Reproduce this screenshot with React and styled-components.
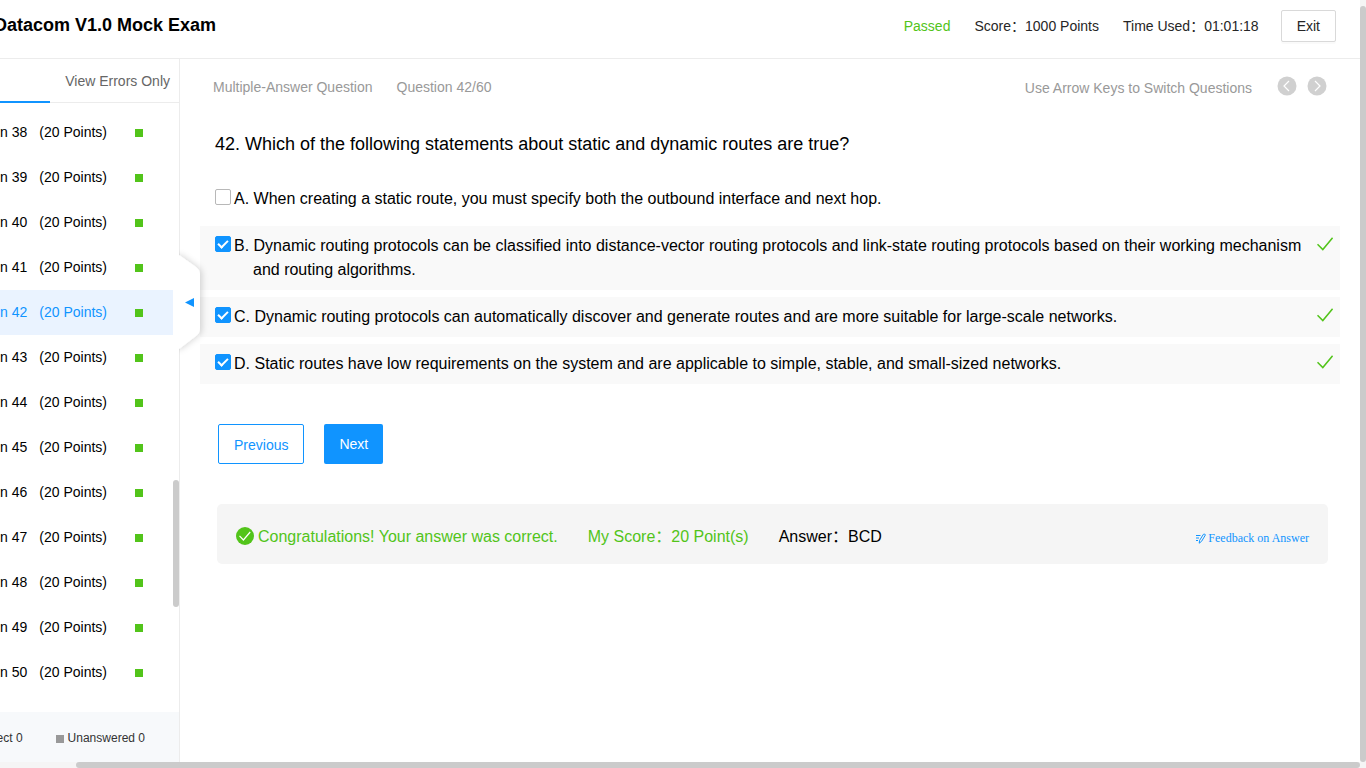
import React from "react";
import styled, { createGlobalStyle } from "styled-components";

const BLUE = "#1094ff";
const GREEN = "#52c41a";
const LINE = "#ececec";

const GlobalStyle = createGlobalStyle`
  *, *::before { box-sizing: border-box; }
  body {
    margin: 0;
    background: #fff;
    color: #000;
    font-family: "Liberation Sans", "Noto Sans CJK SC", sans-serif;
    font-size: 14px;
    line-height: 20px;
  }
  button { font: inherit; cursor: pointer; }
  h1, h2, ul { margin: 0; padding: 0; }
  ul { list-style: none; }
`;

const Frame = styled.div`
  display: grid;
  grid-template-columns: minmax(0, 1fr) 6px;
  grid-template-rows: minmax(0, 1fr) 6px;
  height: 100vh;
  overflow: hidden;
`;

const Track = styled.div`
  display: flex;
  background: #f5f5f5;
  padding-top: ${(p) => p.$top || 0}px;
  padding-left: ${(p) => p.$left || 0}px;
`;

const Thumb = styled.div`
  flex: 1;
  border-radius: 3px;
  background: #cbcbcb;
`;

const Page = styled.div`
  display: flex;
  flex-direction: column;
  min-width: 0;
`;

const Header = styled.header`
  display: flex;
  align-items: center;
  gap: 24px;
  padding: 10px 24px 16px 0;
  border-bottom: 1px solid ${LINE};
  color: #262626;
`;

const Title = styled.h1`
  display: flex;
  justify-content: flex-end;
  width: 216px;
  margin-right: auto;
  padding-bottom: 2px;
  overflow: hidden;
  color: #000;
  font-size: 18px;
  line-height: 24px;
  white-space: nowrap;
`;

const Passed = styled.span`
  color: ${GREEN};
`;

const ExitButton = styled.button`
  height: 32px;
  padding: 0 15px;
  border: 1px solid #d9d9d9;
  border-radius: 2px;
  background: #fff;
  box-shadow: 0 2px 0 rgba(0, 0, 0, 0.02);
  color: #262626;
`;

const HeaderTail = styled.div`
  display: flex;
  align-items: center;
  gap: 22px;
`;

const Body = styled.div`
  position: relative;
  display: flex;
  flex: 1;
  min-height: 0;
`;

const Sidebar = styled.aside`
  display: flex;
  flex-direction: column;
  flex: none;
  width: 180px;
  border-right: 1px solid ${LINE};
`;

const Tabs = styled.div`
  display: flex;
  height: 44px;
  border-bottom: 1px solid ${LINE};
`;

const Tab = styled.button`
  flex: ${(p) => (p.$active ? "0 0 50px" : "1")};
  height: 44px;
  padding: 2px 9px 0 0;
  border: 0;
  border-bottom: 2px solid ${(p) => (p.$active ? BLUE : "transparent")};
  background: none;
  color: #666;
  text-align: right;
  white-space: nowrap;
`;

const ListArea = styled.div`
  display: flex;
  flex: 1;
  min-height: 0;
  overflow: hidden;
`;

const QuestionList = styled.ul`
  flex: 1;
  min-width: 0;
  padding-top: 7px;
`;

const QuestionItem = styled.button`
  display: flex;
  align-items: center;
  justify-content: flex-end;
  gap: 12px;
  width: 100%;
  height: 45px;
  padding: 0 30px 1px 0;
  overflow: hidden;
  border: 0;
  background: ${(p) => (p.$active ? "#eaf3ff" : "transparent")};
  color: ${(p) => (p.$active ? BLUE : "#000")};
  white-space: nowrap;
`;

const Points = styled.span`
  margin-right: 16px;
`;

const Square = styled.span`
  flex: none;
  width: 8px;
  height: 8px;
  margin-top: 2px;
  background: ${(p) => p.$color};
`;

const ListBar = styled.div`
  width: 6px;
  padding-top: 377px;
`;

const ListThumb = styled(Thumb)`
  height: 127px;
`;

const Legend = styled.footer`
  display: flex;
  align-items: center;
  justify-content: flex-end;
  gap: 33px;
  height: 50px;
  padding: 2px 34px 0 0;
  overflow: hidden;
  background: #f7f9fb;
  color: #333;
  font-size: 12px;
  white-space: nowrap;
`;

const LegendItem = styled.span`
  display: flex;
  align-items: center;
  gap: 4px;
`;

const Collapse = styled.button`
  position: absolute;
  top: 186px;
  left: 179px;
  padding: 0;
  border: 0;
  background: none;
  line-height: 0;
`;

const Main = styled.main`
  flex: 1;
  min-width: 0;
  padding: 17px 20px 0;
`;

const Meta = styled.div`
  display: flex;
  align-items: center;
  gap: 24px;
  padding: 0 13px;
  color: #999;
`;

const MetaHint = styled.span`
  margin-left: auto;
  padding: 1px 1px 0 0;
`;

const Pager = styled.div`
  display: flex;
  gap: 10px;
  margin-bottom: 2px;
`;

const RoundButton = styled.button`
  display: flex;
  width: 20px;
  height: 20px;
  padding: 0;
  border: 0;
  border-radius: 50%;
  background: none;
`;

const Question = styled.h2`
  padding: 34px 15px 23px;
  font-size: 18px;
  font-weight: 400;
  line-height: 24px;
`;

const Options = styled.div`
  display: grid;
  gap: 7px;
`;

const Option = styled.div`
  display: flex;
  align-items: flex-start;
  gap: 3px;
  padding: 8px 7px 8px 15px;
  background: ${(p) => (p.$marked ? "#f9f9f9" : "transparent")};
  font-size: 16px;
  line-height: 24px;

  svg {
    flex: none;
    margin: 3px 0 0 8px;
  }
`;

const CheckBox = styled.input.attrs({ type: "checkbox" })`
  appearance: none;
  display: flex;
  flex: none;
  align-items: center;
  justify-content: center;
  width: 16px;
  height: 16px;
  margin: 2px 0 0;
  border: 1px solid #b8b8b8;
  border-radius: 2px;
  background: #fff;

  &:checked {
    border-color: ${BLUE};
    background: ${BLUE};
  }

  &:checked::before {
    content: "";
    width: 6px;
    height: 10px;
    border: solid #fff;
    border-width: 0 2px 2px 0;
    transform: translateY(-1px) rotate(45deg);
  }
`;

const OptionText = styled.label`
  flex: 1;
  padding-left: 19px;
  text-indent: -19px;
`;

const Actions = styled.div`
  display: flex;
  gap: 20px;
  padding: 40px 18px;
`;

const ActionButton = styled.button`
  height: 40px;
  padding: ${(p) => (p.$primary ? "0 15px" : "2px 15px 0")};
  border: ${(p) => (p.$primary ? "0" : `1px solid ${BLUE}`)};
  border-radius: 2px;
  background: ${(p) => (p.$primary ? BLUE : "#fff")};
  color: ${(p) => (p.$primary ? "#fff" : BLUE)};
`;

const Result = styled.section`
  display: flex;
  align-items: center;
  gap: 30px;
  min-height: 60px;
  margin: 0 12px 0 17px;
  padding: 0 19px;
  border-radius: 5px;
  background: #f5f5f5;
  font-size: 16px;
  line-height: 24px;
`;

const ResultText = styled.span`
  display: flex;
  align-items: center;
  gap: 4px;
  padding-top: 6px;
  color: ${(p) => p.$color};

  svg {
    margin-bottom: 2px;
  }
`;

const Feedback = styled.a`
  display: flex;
  align-items: center;
  gap: 2px;
  margin-left: auto;
  padding-top: 8px;
  color: ${BLUE};
  font-family: "Liberation Serif", serif;
  font-size: 12px;
  text-decoration: none;
`;

const Tick = () => (
  <svg width="16" height="14" viewBox="0 0 16 14" fill="none" stroke={GREEN} strokeWidth="1.5" aria-hidden="true">
    <path d="M.5 7.2 5.8 12.6 15.6.8" />
  </svg>
);

const Arrow = ({ d }) => (
  <svg width="20" height="20" viewBox="0 0 20 20" aria-hidden="true">
    <circle cx="10" cy="10" r="9.5" fill="#d0d0d0" />
    <path d={d} fill="none" stroke="#fff" strokeWidth="1.2" />
  </svg>
);

const questions = [38, 39, 40, 41, 42, 43, 44, 45, 46, 47, 48, 49, 50];

const options = [
  { id: "A", text: "When creating a static route, you must specify both the outbound interface and next hop.", correct: false },
  { id: "B", text: "Dynamic routing protocols can be classified into distance-vector routing protocols and link-state routing protocols based on their working mechanism and routing algorithms.", correct: true },
  { id: "C", text: "Dynamic routing protocols can automatically discover and generate routes and are more suitable for large-scale networks.", correct: true },
  { id: "D", text: "Static routes have low requirements on the system and are applicable to simple, stable, and small-sized networks.", correct: true },
];

export default function App() {
  return (
    <>
      <GlobalStyle />
      <Frame>
        <Page>
          <Header>
            <Title>Datacom V1.0 Mock Exam</Title>
            <Passed>Passed</Passed>
            <span>Score：1000 Points</span>
            <HeaderTail>
              <span>Time Used：01:01:18</span>
              <ExitButton>Exit</ExitButton>
            </HeaderTail>
          </Header>
          <Body>
            <Sidebar>
              <Tabs>
                <Tab $active aria-label="All" />
                <Tab>View Errors Only</Tab>
              </Tabs>
              <ListArea>
                <QuestionList>
                  {questions.map((n) => (
                    <li key={n}>
                      <QuestionItem $active={n === 42}>
                        <span>n {n}</span>
                        <Points>(20 Points)</Points>
                        <Square $color={GREEN} />
                      </QuestionItem>
                    </li>
                  ))}
                </QuestionList>
                <ListBar>
                  <ListThumb />
                </ListBar>
              </ListArea>
              <Legend>
                <span>ect 0</span>
                <LegendItem>
                  <Square $color="#999" />
                  Unanswered 0
                </LegendItem>
              </Legend>
            </Sidebar>
            <Main>
              <Meta>
                <span>Multiple-Answer Question</span>
                <span>Question 42/60</span>
                <MetaHint>Use Arrow Keys to Switch Questions</MetaHint>
                <Pager>
                  <RoundButton aria-label="Previous question">
                    <Arrow d="M12 5 7 10l5 5" />
                  </RoundButton>
                  <RoundButton aria-label="Next question">
                    <Arrow d="m8 5 5 5-5 5" />
                  </RoundButton>
                </Pager>
              </Meta>
              <Question>42. Which of the following statements about static and dynamic routes are true?</Question>
              <Options>
                {options.map((o) => (
                  <Option key={o.id} $marked={o.correct}>
                    <CheckBox id={`option-${o.id}`} defaultChecked={o.correct} />
                    <OptionText htmlFor={`option-${o.id}`}>
                      {o.id}. {o.text}
                    </OptionText>
                    {o.correct && <Tick />}
                  </Option>
                ))}
              </Options>
              <Actions>
                <ActionButton>Previous</ActionButton>
                <ActionButton $primary>Next</ActionButton>
              </Actions>
              <Result>
                <ResultText $color={GREEN}>
                  <svg width="18" height="18" viewBox="0 0 18 18" aria-hidden="true">
                    <circle cx="9" cy="9" r="9" fill={GREEN} />
                    <path d="M3.5 8.8 7.4 13 14.2 5" fill="none" stroke="#fff" strokeWidth="1.2" />
                  </svg>
                  Congratulations! Your answer was correct.
                </ResultText>
                <ResultText $color={GREEN}>My Score：20 Point(s)</ResultText>
                <ResultText $color="#000">Answer：BCD</ResultText>
                <Feedback href="#feedback">
                  <svg width="11" height="11" viewBox="0 0 11 11" fill="none" stroke={BLUE} aria-hidden="true">
                    <path d="M1 2.5h4.5M1 5h3M1 7.5h2M4.2 10.2l.4-2.8L8.4 1.3q1.6-.9 2 .7L6.6 8.3 4.2 10.2Z" />
                  </svg>
                  Feedback on Answer
                </Feedback>
              </Result>
            </Main>
            <Collapse aria-label="Collapse question list">
              <svg width="32" height="114" viewBox="0 0 32 114" aria-hidden="true">
                <defs>
                  <filter id="soft" x="-50%" y="-20%" width="200%" height="140%">
                    <feDropShadow dx="2" dy="0" stdDeviation="3" floodColor="#000" floodOpacity="0.16" />
                  </filter>
                </defs>
                <path d="M-6 10H0l17 12q4 3 4 8v53q0 5-4 8L0 104h-6Z" fill="#fff" filter="url(#soft)" />
                <path d="M6 57.5 15 53v9Z" fill={BLUE} />
              </svg>
            </Collapse>
          </Body>
        </Page>
        <Track $top={6}>
          <Thumb />
        </Track>
        <Track $left={76}>
          <Thumb />
        </Track>
        <Track />
      </Frame>
    </>
  );
}
